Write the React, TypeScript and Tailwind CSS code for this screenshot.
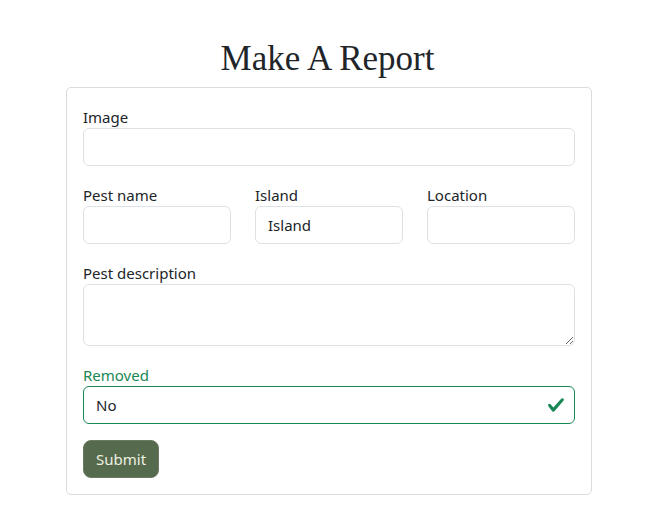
function Field({ label, children, className = '' }: { label: string; children: React.ReactNode; className?: string }) {
  return (
    <div className={className}>
      <label className="block text-[15px] leading-[21px] text-[#212529]">{label}</label>
      {children}
    </div>
  );
}

const inputCls =
  'block w-full h-[38px] rounded-[6px] border border-[#dee2e6] bg-white px-3 text-[15px] text-[#212529] outline-none';

export default function App() {
  return (
    <div className="min-h-[505px] bg-white font-['Noto_Sans','Open_Sans',sans-serif] text-[#212529]">
      <h1 className="pt-[39px] text-center font-['Liberation_Serif',serif] text-[35px] leading-[40px] text-[#212529]">
        Make A Report
      </h1>
      <div className="ml-[66px] mt-[8px] w-[526px] rounded-[5px] border border-[#d9dcdf] px-4 pt-[19px] pb-4">
        <Field label="Image" className="mb-[19px]">
          <input className={inputCls} />
        </Field>

        <div className="mb-[19px] grid grid-cols-3 gap-6">
          <Field label="Pest name">
            <input className={inputCls} />
          </Field>
          <Field label="Island">
            <input className={inputCls} defaultValue="Island" />
          </Field>
          <Field label="Location">
            <input className={inputCls} />
          </Field>
        </div>

        <Field label="Pest description" className="mb-[19px]">
          <textarea className="block h-[62px] w-full rounded-[6px] border border-[#dee2e6] px-3 py-1.5 text-[15px] outline-none" />
        </Field>

        <div className="mb-[16px]">
          <label className="block text-[15px] leading-[21px] text-[#198754]">Removed</label>
          <div className="flex h-[38px] w-full items-center justify-between rounded-[6px] border border-[#198754] bg-white pl-3 pr-[9px]">
            <span className="text-[15px]">No</span>
            <svg viewBox="0 0 8 8" className="h-[18px] w-[18px]">
              <path
                fill="#198754"
                d="M2.3 6.73.6 4.53c-.4-1.04.46-1.4 1.1-.8l1.1 1.4 3.4-3.8c.6-.63 1.6-.27 1.2.7l-4 4.6c-.43.5-.8.4-1.1.1z"
              />
            </svg>
          </div>
        </div>

        <button className="h-[38px] rounded-[8px] border border-[#6c7a62] bg-[#566a4d] px-3 text-[15px] text-[#eef0e2]">
          Submit
        </button>
      </div>
    </div>
  );
}
